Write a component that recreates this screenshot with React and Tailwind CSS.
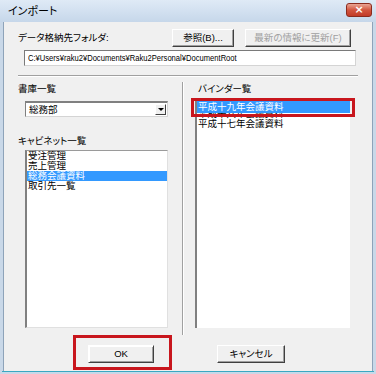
import React from "react";

const btn =
  "flex items-center justify-center h-[18px] bg-[#f0f0f0] border border-t-white border-l-white border-r-[#404040] border-b-[#404040] shadow-[inset_-1px_-1px_0_#a0a0a0]";

const leftItems = ["受注管理", "売上管理", "総務会議資料", "取引先一覧"];

export default function App() {
  return (
    <div className="relative w-[376px] h-[374px] overflow-hidden bg-[#c9d8e8] font-['Liberation_Sans','Noto_Sans_CJK_JP',sans-serif] text-[9.5px] text-black [font-feature-settings:'palt']">
      {/* title bar */}
      <div className="flex items-center justify-between h-[22px] bg-gradient-to-b from-[#dfeaf6] to-[#c6d7ea]">
        <span className="ml-[8px] text-[11px] leading-[12px]">インポート</span>
        <div className="mr-[4px] mb-[3px] flex items-center justify-center w-[26px] h-[14px] rounded-[3px] border border-[#8b2b1e] bg-gradient-to-b from-[#e9a595] via-[#d2553f] to-[#c23b27] text-white text-[11px] font-bold leading-none font-['DejaVu_Sans',sans-serif]">
          ×
        </div>
      </div>

      {/* client area */}
      <div className="ml-[3px] mr-[3px] h-[349px] border-l border-r border-[#8ea3b9] bg-[#f0f0f0] flex flex-col">
        {/* folder row */}
        <div className="flex items-center mt-[7px]">
          <div className="w-[168px] pl-[14px] leading-[12px]">データ格納先フォルダ:</div>
          <div className={`${btn} w-[62px]`}>参照(B)...</div>
          <div className={`${btn} w-[106px] ml-[11px] text-[#a0a0a0]`}>最新の情報に更新(F)</div>
        </div>
        <div className="mt-[3px] ml-[20px] w-[332px] h-[16px] flex items-center pl-[3px] bg-white border border-t-[#7a7a7a] border-l-[#7a7a7a] border-r-[#d4d4d4] border-b-[#d4d4d4] whitespace-nowrap overflow-hidden">
          <span className="inline-block origin-left scale-x-[0.8]">
            C:¥Users¥raku2¥Documents¥Raku2Personal¥DocumentRoot
          </span>
        </div>
        <div className="mt-[9px] ml-[14px] w-[340px] border-t border-b border-t-[#a0a0a0] border-b-white" />

        {/* columns */}
        <div className="flex h-[258px]">
          <div className="ml-[14px] w-[150px] flex flex-col">
            <div className="pt-[6px] leading-[12px] h-[18px]">書庫一覧</div>
            <div className="mt-[6px] ml-[7px] w-[143px] h-[16px] flex items-center justify-between bg-white border border-t-[2px] border-t-[#808080] border-l-[#808080] border-r-[#d4d4d4] border-b-[#d4d4d4]">
              <span className="pl-[3px] leading-[12px]">総務部</span>
              <div className="w-[11px] h-[11px] mr-[1px] flex items-center justify-center bg-[#f0f0f0] border border-t-white border-l-white border-r-[#404040] border-b-[#404040]">
                <div className="w-0 h-0 border-l-[3px] border-r-[3px] border-t-[3px] border-l-transparent border-r-transparent border-t-black" />
              </div>
            </div>
            <div className="mt-[18px] leading-[12px]">キャビネット一覧</div>
            <div className="mt-[3px] ml-[7px] w-[143px] h-[178px] bg-white border border-[#9a9a9a] border-l-[2px] border-l-[#808080] border-r-[#e0e0e0] border-b-[#e0e0e0] flex flex-col">
              {leftItems.map((t, i) => (
                <div
                  key={t}
                  className={
                    i === 2
                      ? "h-[10px] leading-[10px] pl-[1px] bg-[#3399ff] text-white"
                      : "h-[10px] leading-[10px] pl-[1px]"
                  }
                >
                  {t}
                </div>
              ))}
            </div>
          </div>

          <div className="ml-[14px] mt-[5px] h-[253px] w-[2px] border-l border-r border-l-[#a0a0a0] border-r-white" />

          <div className="ml-[11px] w-[155px] flex flex-col">
            <div className="pt-[6px] pl-[3px] leading-[12px] h-[18px]">バインダー覧</div>
            <div className="mt-[4px] w-[155px] h-[229px] bg-white border-l-[2px] border-l-[#808080] pt-[2px] flex flex-col">
              <div className="h-[12px] leading-[12px] pl-[1px] bg-[#3399ff] text-white">平成十九年会議資料</div>
              <div className="h-[6px] overflow-hidden pl-[1px]">
                <div className="h-[12px] leading-[12px] -mt-[5px]">平成十八年会議資料</div>
              </div>
              <div className="h-[10px] leading-[10px] pl-[1px]">平成十七年会議資料</div>
            </div>
          </div>
        </div>

        {/* buttons */}
        <div className="flex mt-[10px]">
          <div className={`${btn} ml-[84px] w-[66px] h-[17px] border-[#404040] shadow-[inset_1px_1px_0_white,inset_-1px_-1px_0_#a0a0a0]`}>OK</div>
          <div className={`${btn} ml-[63px] w-[68px] h-[17px]`}>キャンセル</div>
        </div>
      </div>
      <div className="h-[1px] bg-[#3aa8c2] mx-[2px]" />

      {/* annotation overlays */}
      <div className="absolute left-[73px] top-[335px] w-[99px] h-[35px] border-[3px] border-[#c8161d]" />
      <div className="absolute left-[191px] top-[98px] w-[164px] h-[19px] border-[3px] border-[#c8161d]" />
    </div>
  );
}
